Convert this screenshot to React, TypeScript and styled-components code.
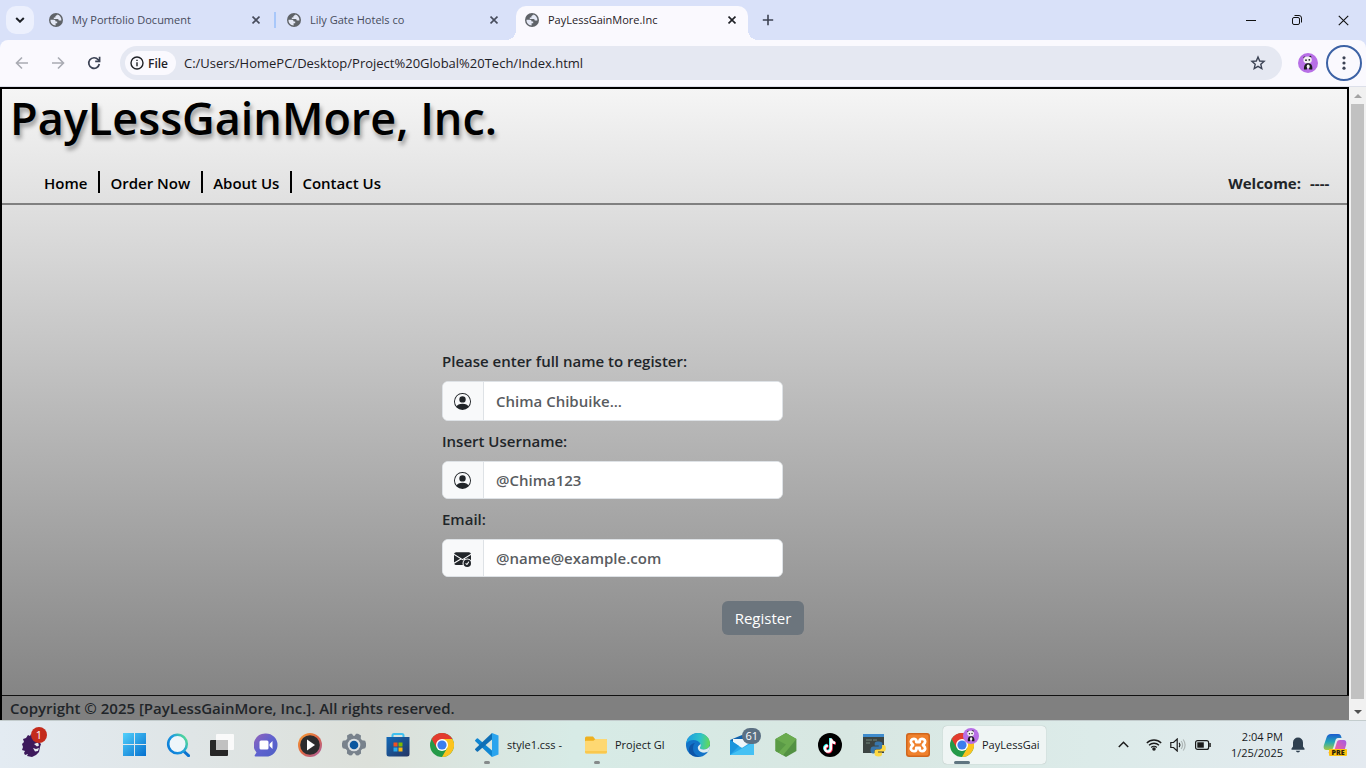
import React from "react";
import styled, { createGlobalStyle, css } from "styled-components";
import { BsPersonCircle, BsEnvelopeCheckFill } from "react-icons/bs";

const GlobalStyle = createGlobalStyle`
  * { box-sizing: border-box; }
  html, body { margin: 0; }
  body { font-family: "Open Sans", "Noto Sans", sans-serif; color: #212529; }
  button, input { font: inherit; color: inherit; }
  button { border: 0; padding: 0; background: none; cursor: pointer; }
  svg { display: block; flex: none; }
`;

const Screen = styled.div`
  display: flex;
  flex-direction: column;
  height: 100vh;
  overflow: hidden;
  background: #d9e1f9;
`;

/* ---------- browser chrome ---------- */

const TabStrip = styled.div`
  display: flex;
  height: 40px;
  flex: none;
  padding-left: 6px;
`;

const TabSearch = styled.button`
  display: grid;
  place-items: center;
  width: 28px;
  height: 28px;
  margin: 6px 4px 0 0;
  border-radius: 10px;
  background: #ecf0fd;
  color: #1d2026;
`;

const Tab = styled.div<{ $active?: boolean }>`
  position: relative;
  display: flex;
  align-items: center;
  gap: 9px;
  width: 238px;
  height: 34px;
  margin-top: 6px;
  padding: 0 10px 6px 11px;
  font-size: 11px;
  line-height: 16px;
  color: #474c5c;
  ${(p) =>
    p.$active &&
    css`
      width: 232px;
      margin: 6px 4px 0 2px;
      padding: 0 6px 6px 9px;
      background: #faf9fe;
      border-radius: 10px 10px 0 0;
      color: #1f2126;
      &::before,
      &::after {
        content: "";
        position: absolute;
        bottom: 0;
        width: 10px;
        height: 10px;
      }
      &::before {
        left: -10px;
        background: radial-gradient(circle at 0 0, transparent 10px, #faf9fe 10px);
      }
      &::after {
        right: -10px;
        background: radial-gradient(circle at 100% 0, transparent 10px, #faf9fe 10px);
      }
    `}
`;

const TabTitle = styled.span`
  flex: 1;
  white-space: nowrap;
  overflow: hidden;
`;

const TabDivider = styled.span`
  width: 2px;
  height: 16px;
  margin: 12px 0 0 -2px;
  background: #a8c7fa;
`;

const TabButton = styled.button`
  display: grid;
  place-items: center;
  width: 20px;
  height: 20px;
`;

const NewTab = styled(TabButton)`
  width: 28px;
  height: 28px;
  margin: 6px 0 0 2px;
  color: #3c4252;
`;

const WindowControls = styled.div`
  display: flex;
  margin-left: auto;
`;

const WindowButton = styled.button`
  display: grid;
  place-items: center;
  width: 46px;
  height: 40px;
  color: #111;
`;

const Toolbar = styled.div`
  display: flex;
  align-items: center;
  flex: none;
  height: 47px;
  padding: 0 4px;
  background: #faf9fe;
  border-bottom: 1px solid #dde0ea;
  border-radius: 8px 8px 0 0;
`;

const ToolButton = styled.button<{ $dim?: boolean }>`
  display: grid;
  place-items: center;
  width: 36px;
  height: 36px;
  color: ${(p) => (p.$dim ? "#a9abb3" : "#3b4254")};
`;

const AddressBar = styled.div`
  display: flex;
  align-items: center;
  flex: 1;
  height: 34px;
  margin: 0 8px;
  padding: 0 14px 0 5px;
  border-radius: 17px;
  background: #e5e8f2;
`;

const FileChip = styled.button`
  display: flex;
  align-items: center;
  gap: 4px;
  height: 24px;
  padding: 0 8px 0 5px;
  border-radius: 12px;
  background: #faf9fe;
  color: #1f2126;
  font-size: 12px;
  font-weight: 600;
`;

const AddressInput = styled.input`
  flex: 1;
  min-width: 0;
  margin-left: 8px;
  padding: 0;
  border: 0;
  outline: 0;
  background: transparent;
  font-size: 13px;
  line-height: 20px;
  color: #1f2126;
`;

const MenuButton = styled.button`
  display: grid;
  place-items: center;
  width: 36px;
  height: 36px;
  border: 2px solid #3c62a5;
  border-radius: 50%;
  color: #3b4254;
`;

/* ---------- page ---------- */

const Viewport = styled.div`
  display: flex;
  flex: 1;
  min-height: 0;
`;

const Page = styled.div`
  display: flex;
  flex-direction: column;
  flex: 1;
  min-width: 0;
  border: 2px solid #000;
  border-bottom: 0;
  background: linear-gradient(#f5f5f5, #808080);
  font-size: 15px;
  line-height: 24px;
  font-weight: 600;
`;

const Header = styled.header`
  border-bottom: 2px solid #808080;
`;

const Brand = styled.h1`
  margin: 0;
  padding: 0 8px 2px;
  font-size: 45px;
  line-height: 58px;
  font-weight: 600;
  color: #000;
  text-shadow: 2px 4px 4px rgba(0, 0, 0, 0.35);
`;

const NavRow = styled.div`
  display: flex;
  align-items: center;
  justify-content: space-between;
  padding: 22px 13px 10px 32px;
`;

const NavList = styled.ul`
  display: flex;
  margin: 0;
  padding: 0;
  list-style: none;
`;

const NavItem = styled.li`
  display: flex;
  height: 22px;
  padding: 0 11px 0 10px;
  align-items: center;
  & + & {
    border-left: 2px solid #000;
  }
`;

const NavLink = styled.a`
  padding-top: 2px;
  color: #000;
  text-decoration: none;
`;

const Welcome = styled.div`
  display: flex;
  gap: 9px;
  padding-top: 2px;
  line-height: 20px;
  font-weight: 700;
`;

const UserName = styled.span`
  min-width: 24px;
`;

const Main = styled.main`
  flex: 1;
  min-height: 0;
  padding-top: 144px;
`;

const Form = styled.form`
  display: flex;
  flex-direction: column;
  width: 465px;
  margin: 0 auto;
`;

const Label = styled.label`
  margin-bottom: 8px;
`;

const InputGroup = styled.div<{ $tall?: boolean }>`
  display: flex;
  width: 341px;
  height: ${(p) => (p.$tall ? 40 : 38)}px;
  margin-bottom: 8px;
  border: 1px solid #dee2e6;
  border-radius: 6px;
  overflow: hidden;
  background: #fff;
`;

const Addon = styled.span`
  display: flex;
  align-items: center;
  width: 41px;
  padding-left: 11px;
  border-right: 1px solid #dee2e6;
  background: #f8f9fa;
`;

const TextInput = styled.input`
  flex: 1;
  min-width: 0;
  padding: 0 12px;
  border: 0;
  outline: 0;
  background: #fff;
  font-weight: 600;
  &::placeholder {
    color: #595c5f;
    opacity: 1;
  }
`;

const RegisterButton = styled.button`
  width: 82px;
  height: 34px;
  margin: 16px 0 0 280px;
  border-radius: 6px;
  background: #6c757d;
  color: #fff;
  font-weight: 400;
`;

const Footer = styled.footer`
  height: 25px;
  margin-right: -2px;
  padding-left: 8px;
  border-top: 1px solid #111;
  background: #808080;
`;

const ScrollTrack = styled.div`
  display: flex;
  flex-direction: column;
  align-items: center;
  width: 17px;
  background: #f1f1f1;
`;

const ScrollArrow = styled.button`
  display: grid;
  place-items: center;
  width: 17px;
  height: 17px;
`;

const ScrollThumb = styled.div`
  width: 13px;
  flex: 1;
  margin-bottom: 4px;
  background: #c1c1c1;
`;

/* ---------- taskbar ---------- */

const Taskbar = styled.div`
  display: flex;
  align-items: center;
  flex: none;
  height: 48px;
  padding: 0 9px 0 10px;
  border-top: 1px solid #c3cccd;
  background: linear-gradient(90deg, #e3ebf2 0%, #dfe5e6 14%, #dce0da 27%, #d7ebe6 42%, #d8e7e2 62%, #dcebe9 80%, #e4eaf0 100%);
  font-size: 11px;
  line-height: 16px;
  color: #16191c;
`;

const AppGroup = styled.div`
  display: flex;
  margin-left: 58px;
`;

const TaskButton = styled.button<{ $wide?: number; $active?: boolean }>`
  position: relative;
  display: flex;
  align-items: center;
  justify-content: ${(p) => (p.$wide ? "flex-start" : "center")};
  gap: 8px;
  width: ${(p) => p.$wide || 44}px;
  height: 38px;
  padding: ${(p) => (p.$active ? "0 0 0 7px" : p.$wide ? "0 0 0 11px" : "0")};
  ${(p) =>
    p.$active &&
    css`
      margin: 0 3px;
      border-radius: 4px;
      background: #eff5f4;
      box-shadow: 0 0 1px rgba(0, 0, 0, 0.3);
    `}
`;

const TaskLabel = styled.span`
  text-align: left;
  white-space: nowrap;
`;

const Running = styled.span<{ $active?: boolean }>`
  position: absolute;
  bottom: 0;
  left: ${(p) => (p.$active ? 11 : 20)}px;
  width: ${(p) => (p.$active ? 16 : 6)}px;
  height: 3px;
  border-radius: 2px;
  background: ${(p) => (p.$active ? "#5f7580" : "#858a8a")};
`;

const Badge = styled.span<{ $red?: boolean }>`
  position: absolute;
  top: ${(p) => (p.$red ? 1 : 2)}px;
  right: ${(p) => (p.$red ? 7 : 3)}px;
  min-width: 16px;
  height: 16px;
  padding: 0 3px;
  border-radius: 8px;
  background: ${(p) => (p.$red ? "#c42b1c" : "#5b7083")};
  color: #fff;
  font-size: 11px;
  line-height: 16px;
  text-align: center;
`;

const PandaBadge = styled.span`
  position: absolute;
  top: 2px;
  left: 20px;
`;

const Tray = styled.div`
  display: flex;
  align-items: center;
  margin-left: auto;
`;

const TrayButton = styled.button<{ $w: number }>`
  display: grid;
  place-items: center;
  width: ${(p) => p.$w}px;
  height: 38px;
`;

const Clock = styled.button`
  width: 67px;
  text-align: right;
  font-size: 11px;
  line-height: 16px;
`;

/* ---------- icons ---------- */

const Globe = () => (
  <svg width="14" height="14" viewBox="0 0 14 14">
    <circle cx="7" cy="7" r="7" fill="#5f6368" />
    <path d="M1.500 6.700L5 6.700C6.500 6.700 6.600 8 6.600 8.500H8.200V10.200H6.600V12.400C3.700 12.300 1.300 9.800 1.500 6.700z" fill="#e4e8f5" />
    <path d="M8.300 1.600C8.300 2.800 7.600 3 6.400 3V4.600H4.800V6H8.600C9.600 6 9.700 7 9.700 7.600H12.400C12.700 4.700 10.900 2.300 8.300 1.600z" fill="#e4e8f5" />
  </svg>
);

const Cross = ({ size = 8, w = 1.6 }: { size?: number; w?: number }) => (
  <svg width={size} height={size} viewBox="0 0 10 10" fill="none" stroke="currentColor" strokeWidth={w * (10 / size)}>
    <path d="M.7.7l8.600 8.600M9.300.7L.7 9.300" />
  </svg>
);

const Arrow = ({ flip }: { flip?: boolean }) => (
  <svg width="14" height="14" viewBox="0 0 14 14" fill="none" stroke="currentColor" strokeWidth="1.600">
    <path d={flip ? "M1 7h11M7 1.500L12.500 7 7 12.500" : "M13 7H2M7 1.500L1.500 7 7 12.500"} />
  </svg>
);

const Panda = ({ size }: { size: number }) => (
  <svg width={size} height={size} viewBox="0 0 20 20">
    <circle cx="10" cy="10" r="10" fill="#b76fe6" />
    <circle cx="6.500" cy="4.500" r="1.100" fill="#222" />
    <circle cx="12.300" cy="3.900" r="1.100" fill="#222" />
    <ellipse cx="9.600" cy="6.900" rx="4.200" ry="3.400" fill="#f2f2f2" />
    <circle cx="8" cy="7.200" r=".9" fill="#222" />
    <circle cx="11.300" cy="6.800" r=".9" fill="#222" />
    <path d="M6 16.500c-.3-4 1-6.300 4-6.300s4.800 2 4.300 6.300h-3l-.6-2.500h-1.400l-.5 2.500z" fill="#1b1b1f" />
    <ellipse cx="10.200" cy="13.500" rx="1.500" ry="2" fill="#f2f2f2" />
  </svg>
);

const Chrome = () => (
  <svg width="24" height="24" viewBox="0 0 24 24">
    <circle cx="12" cy="12" r="12" fill="#249a48" />
    <path d="M22.400 6A12 12 0 0 1 12 24l5.200-9L12 6z" fill="#fcc31e" />
    <path d="M1.600 6L6.800 15 12 12V6h10.400A12 12 0 0 0 1.600 6z" fill="#e33b2e" />
    <circle cx="12" cy="12" r="6" fill="#fff" />
    <circle cx="12" cy="12" r="4.600" fill="#3b7ded" />
  </svg>
);

const Lion = () => (
  <svg width="20" height="24" viewBox="0 0 20 24" fill="#3d195b">
    <path d="M6 2l2 1 1-2 1.500 2L13 1l1 3 3 1v4l2 2-1 3-1 5-3 3-4 2-5-1 1-2-3 1-1-2 1-2-3-1 1-3-1-3 2-2-1-3 3-1z" />
    <path d="M12 11l4-1.500 1 3-2 1zM11 15l3 1 3-1-1 3-3 .5z" fill="#e6ebf1" />
  </svg>
);

const Windows = () => (
  <svg width="23" height="23" viewBox="0 0 23 23">
    <defs>
      <linearGradient id="win" x1="0" y1="0" x2="1" y2="1">
        <stop offset="0" stopColor="#52d0fb" />
        <stop offset="1" stopColor="#0570cf" />
      </linearGradient>
    </defs>
    <path d="M0 0h11v11H0zM12 0h11v11H12zM0 12h11v11H0zM12 12h11v11H12z" fill="url(#win)" />
  </svg>
);

const Search = () => (
  <svg width="24" height="24" viewBox="0 0 24 24" fill="none">
    <defs>
      <linearGradient id="srch" x1="0" y1=".8" x2="1" y2=".1">
        <stop offset="0" stopColor="#0a7bd8" />
        <stop offset=".5" stopColor="#1d9be0" />
        <stop offset="1" stopColor="#5be38c" />
      </linearGradient>
    </defs>
    <path d="M17.500 18l5 4.700" stroke="#0b72cf" strokeWidth="3" strokeLinecap="round" />
    <circle cx="11.500" cy="11" r="9.300" stroke="url(#srch)" strokeWidth="2.600" fill="#eef6fa" />
  </svg>
);

const TaskView = () => (
  <svg width="24" height="24" viewBox="0 0 24 24">
    <rect x="0" y="7" width="18" height="16" rx="1" fill="#262626" />
    <rect x="6" y="1" width="18" height="16" rx="1" fill="#fafafa" />
    <path d="M6 7h12v10H6z" fill="#c1c1c1" />
  </svg>
);

const Chat = () => (
  <svg width="24" height="24" viewBox="0 0 24 24">
    <defs>
      <linearGradient id="chat" x1="0" y1="0" x2="1" y2="1">
        <stop offset="0" stopColor="#9563b8" />
        <stop offset=".5" stopColor="#5f62cf" />
        <stop offset="1" stopColor="#4d5fc4" />
      </linearGradient>
    </defs>
    <path d="M12 .5A11.500 11.500 0 1 1 12 23.500H1.500c-1 0-1.200-.8-.6-1.500l1.600-2.600A11.500 11.500 0 0 1 12 .5z" fill="url(#chat)" />
    <rect x="5.500" y="7.500" width="9" height="9" rx="1.500" fill="#fff" />
    <path d="M15.500 11l3-3v8l-3-3z" fill="#fff" />
  </svg>
);

const Media = () => (
  <svg width="24" height="24" viewBox="0 0 24 24">
    <defs>
      <linearGradient id="med" x1="0" y1="0" x2="1" y2="1">
        <stop offset="0" stopColor="#f7a235" />
        <stop offset=".5" stopColor="#dd6546" />
        <stop offset="1" stopColor="#a860a8" />
      </linearGradient>
    </defs>
    <circle cx="12" cy="12" r="12" fill="url(#med)" />
    <circle cx="12" cy="12" r="9.800" fill="#2c2c2e" />
    <path d="M9 6.500v11l8-5.500z" fill="#fff" />
  </svg>
);

const Gear = () => (
  <svg width="24" height="24" viewBox="0 0 24 24">
    <path d="M8 .8h2l1.200 2h1.600l1.200-2h2l3 1.800-.3 3 1.300 1.600 3.200.5.8 2.600v3l-.8 2-3 .6-1.300 1.600.2 3-2.900 2-2.200-.2-1.200-2h-1.600l-1.200 2-2.200.2-2.900-2 .2-3-1.300-1.600-3-.6-.8-2v-3l.8-2.600 3.200-.5 1.300-1.600-.3-3z" fill="#78828c" />
    <circle cx="12" cy="12" r="6.300" fill="#d9dee1" />
    <circle cx="12" cy="12" r="4.300" fill="#0a569f" />
  </svg>
);

const Store = () => (
  <svg width="24" height="24" viewBox="0 0 24 24">
    <defs>
      <linearGradient id="sto" x1="0" y1="0" x2="1" y2="1">
        <stop offset="0" stopColor="#1269b8" />
        <stop offset="1" stopColor="#253562" />
      </linearGradient>
    </defs>
    <path d="M6.500 6V2.500Q6.500 1 8 1h8q1.500 0 1.500 1.500V6" fill="none" stroke="#3fc0ef" strokeWidth="2" />
    <path d="M.5 4h23v17q0 2.500-2.500 2.500H3Q.5 23.500.5 21z" fill="url(#sto)" />
    <path d="M7.500 9.500h4v4h-4z" fill="#f05022" />
    <path d="M12.500 9.500h4v4h-4z" fill="#7fba00" />
    <path d="M7.500 14.500h4v4h-4z" fill="#27a9ea" />
    <path d="M12.500 14.500h4v4h-4z" fill="#fdb813" />
  </svg>
);

const Code = () => (
  <svg width="24" height="24" viewBox="0 0 24 24">
    <path d="M17 24v-6.500L3 5.500q-.6-.4-1.200 0L.3 7q-.6.600 0 1.200z" fill="#0f86d2" />
    <path d="M17 0v6.500L3 18.500q-.6.400-1.200 0L.3 17q-.6-.6 0-1.200z" fill="#0f6fb5" />
    <path d="M17 0l6.500 2.500v19L17 24z" fill="#2aa4ee" />
  </svg>
);

const Folder = () => (
  <svg width="22" height="18" viewBox="0 0 22 18">
    <path d="M0 2q0-1.500 1.500-1.500H8L10 3h10.500Q22 3 22 4.500V8H0z" fill="#eeb01f" />
    <path d="M0 5.500Q0 4.800 1 4.800h7.500L10.500 3H21q1 0 1 1v12q0 1.500-1.500 1.500h-19Q0 17.500 0 16z" fill="#fed872" />
    <path d="M0 15h22v1q0 1.500-1.500 1.500h-19Q0 17.500 0 16z" fill="#f9c84e" />
  </svg>
);

const Edge = () => (
  <svg width="24" height="24" viewBox="0 0 24 24">
    <defs>
      <linearGradient id="edg" x1="0" y1=".3" x2="1" y2=".4">
        <stop offset="0" stopColor="#1b9de2" />
        <stop offset=".6" stopColor="#2fc3c8" />
        <stop offset="1" stopColor="#63d957" />
      </linearGradient>
    </defs>
    <circle cx="12" cy="12" r="12" fill="#1273c8" />
    <path d="M.2 10.500C1 4.500 6 0 12 0c7 0 12 5 12 10.500 0 3.500-2.800 6-6.300 6-2.700 0-4-1-3.700-2 1-1.500 1-2.500.5-3.500C12.500 6.500 4.500 5 .2 10.500z" fill="url(#edg)" />
    <path d="M9 10c-3 3-2.500 9 1 12 1.500 1.200 4 1.900 6 1.300-4 1.200-9.500.5-12.600-3C2 15 4 10.500 9 10z" fill="#0d55a8" />
    <path d="M14.500 11c.5 1 .5 2-.5 3.500-.3 1 1 2 3.700 2 2.300 0 4.500-1 5.700-3l.6 0-.6 3-1.400 2.300c-3.500 1.600-8.500 1-10-2.800-.7-2 .5-3.500 2.500-5z" fill="#dcebf0" />
  </svg>
);

const Mail = () => (
  <svg width="24" height="20" viewBox="0 0 24 20">
    <path d="M0 5L12 0l12 5v7H0z" fill="#1163ae" />
    <path d="M3 4h18v8H3z" fill="#eef6fa" />
    <path d="M0 5l12 8 12-8v15H0z" fill="#28a8ea" />
    <path d="M0 20L24 7v13z" fill="#45c1f4" />
    <path d="M0 5l9 6-9 9z" fill="#1b94dc" />
  </svg>
);

const Node = () => (
  <svg width="22" height="24" viewBox="0 0 22 24">
    <path d="M11 0l10.400 6v12L11 24 .6 18V6z" fill="#539143" />
    <path d="M11 0l10.400 6L8 22.200.6 18V6z" fill="#6aab4f" />
    <path d="M.6 6L11 11.500 3.500 19.600.6 18z" fill="#5a9a46" />
  </svg>
);

const TikTok = () => (
  <svg width="24" height="24" viewBox="0 0 24 24" fill="none" strokeWidth="2.400">
    <circle cx="12" cy="12" r="12" fill="#000" />
    <path d="M12.200 5v10a3 3 0 1 1-3-3M12.200 5.500c.4 2.400 2 3.800 4.300 4" stroke="#25f4ee" />
    <path d="M13.600 6.300v10a3 3 0 1 1-3-3M13.600 6.500c.4 2.400 2 3.800 4.300 4" stroke="#fe2c55" />
    <path d="M12.900 5.600v10a3 3 0 1 1-3-3M12.900 6c.4 2.400 2 3.800 4.300 4" stroke="#fff" />
  </svg>
);

const Python = () => (
  <svg width="24" height="24" viewBox="0 0 24 24">
    <path d="M1 2h21v18H1z" fill="#3c4442" />
    <path d="M1 1h21v3H1z" fill="#3f8ccd" />
    <path d="M4 7h6M4 10h4M11 7h4" stroke="#70857a" />
    <path d="M16 8.500c-3 0-3.300 1-3.300 2.500v1.500h4v1h-5.500c-1.500 0-2.700 1-2.700 3.500s1 3.500 2.500 3.500h1.500v-2c0-1.500 1-2.500 2.500-2.500h3.500c1.200 0 2-.8 2-2V11c0-1.500-1-2.500-4.500-2.500z" fill="#3876ac" />
    <path d="M16.500 23.500c3 0 3.500-1 3.500-2.500v-1.500h-4v-1h5.500c1.500 0 2.300-1 2.300-3.200 0-2.300-.9-3.300-2.300-3.300h-1.400v2c0 1.500-1 2.500-2.500 2.500h-3c-1.200 0-2 .8-2 2V21c0 1.500 1 2.500 3.900 2.500z" fill="#fed843" />
  </svg>
);

const Xampp = () => (
  <svg width="24" height="24" viewBox="0 0 24 24">
    <rect width="24" height="24" rx="3" fill="#d1661d" />
    <rect x="1.500" y="1.500" width="21" height="21" rx="2" fill="#f0812d" />
    <path
      d="M8 5.800C5.300 5.800 4.300 8 5.200 9.800L7 12 5.200 14.200C4.300 16 5.300 18.200 8 18.200S10.300 16.200 10.300 15H13.700C13.700 16.200 13.500 18.200 16 18.200S19.700 16 18.800 14.200L17 12 18.800 9.800C19.700 8 18.700 5.800 16 5.800S13.700 7.800 13.700 9H10.300C10.300 7.800 10.500 5.800 8 5.800z"
      fill="none"
      stroke="#fff"
      strokeWidth="2.800"
      strokeLinejoin="round"
    />
  </svg>
);

const Copilot = () => (
  <svg width="24" height="24" viewBox="0 0 24 24">
    <defs>
      <linearGradient id="cpa" x1="0" y1="0" x2="0" y2="1">
        <stop offset="0" stopColor="#1b5bd0" />
        <stop offset=".5" stopColor="#23a7b8" />
        <stop offset="1" stopColor="#a6c843" />
      </linearGradient>
      <linearGradient id="cpb" x1="1" y1="0" x2="0" y2="1">
        <stop offset="0" stopColor="#a35be8" />
        <stop offset=".6" stopColor="#f0609a" />
        <stop offset="1" stopColor="#f58a4f" />
      </linearGradient>
    </defs>
    <path d="M8 1h7c2.500 0 3 1.500 3.600 4H15c-1.500 0-2.200 1-2.600 2.500L10.500 14c-.5 2-1.500 3-3.500 3H3.500C1 17 .2 15 .8 12.500l2.700-8C4.200 2.200 5.500 1 8 1z" fill="url(#cpa)" />
    <path d="M17 7h3.500c2.500 0 3.300 2 2.700 4.500L21 19c-.7 2.500-2 4-4.500 4H9c-2 0-3-1.500-3.500-4H9c1.500 0 2.200-1 2.600-2.500l2-6.500C14 8 15 7 17 7z" fill="url(#cpb)" />
    <rect x="6" y="16" width="18" height="7" rx="1" fill="#fdc312" />
    <text x="15" y="22" textAnchor="middle" fontSize="7" fontWeight="800" fontFamily="Open Sans, sans-serif" fill="#2a2208">PRE</text>
  </svg>
);

const navItems = ["Home", "Order Now", "About Us", "Contact Us"];

const fields = [
  { id: "fullname", label: "Please enter full name to register:", hint: "Chima Chibuike...", Icon: BsPersonCircle, tall: true },
  { id: "username", label: "Insert Username:", hint: "@Chima123", Icon: BsPersonCircle },
  { id: "email", label: "Email:", hint: "@name@example.com", Icon: BsEnvelopeCheckFill },
];

const pinned = [
  ["Start", Windows],
  ["Search", Search],
  ["Task view", TaskView],
  ["Chat", Chat],
  ["Media player", Media],
  ["Settings", Gear],
  ["Store", Store],
  ["Chrome", Chrome],
] as const;

const BrowserTab = ({ title, active }: { title: string; active?: boolean }) => (
  <Tab $active={active}>
    <Globe />
    <TabTitle>{title}</TabTitle>
    <TabButton aria-label={`Close ${title}`}>
      <Cross size={8} />
    </TabButton>
  </Tab>
);

export default function App() {
  return (
    <Screen>
      <GlobalStyle />
      <TabStrip>
        <TabSearch aria-label="Search tabs">
          <svg width="10" height="6" viewBox="0 0 10 6" fill="none" stroke="currentColor" strokeWidth="2">
            <path d="M1.200 1L5 4.700 8.800 1" />
          </svg>
        </TabSearch>
        <BrowserTab title="My Portfolio Document" />
        <TabDivider />
        <BrowserTab title="Lily Gate Hotels co" />
        <BrowserTab title="PayLessGainMore.Inc" active />
        <NewTab aria-label="New tab">
          <svg width="12" height="12" viewBox="0 0 12 12" stroke="currentColor" strokeWidth="1.600">
            <path d="M6 .8v10.400M.8 6h10.400" />
          </svg>
        </NewTab>
        <WindowControls>
          <WindowButton aria-label="Minimize">
            <svg width="10" height="10" viewBox="0 0 10 10" stroke="currentColor">
              <path d="M0 5.500h10" />
            </svg>
          </WindowButton>
          <WindowButton aria-label="Restore">
            <svg width="10" height="10" viewBox="0 0 10 10" fill="none" stroke="currentColor">
              <rect x=".5" y="2.500" width="7" height="7" rx="1.500" />
              <path d="M2.500.5H7Q9.500.5 9.500 3v4.500" />
            </svg>
          </WindowButton>
          <WindowButton aria-label="Close">
            <Cross size={11} w={1.1} />
          </WindowButton>
        </WindowControls>
      </TabStrip>

      <Toolbar>
        <ToolButton $dim aria-label="Back">
          <Arrow />
        </ToolButton>
        <ToolButton $dim aria-label="Forward">
          <Arrow flip />
        </ToolButton>
        <ToolButton aria-label="Reload">
          <svg width="14" height="14" viewBox="0 0 14 14" fill="none" stroke="currentColor" strokeWidth="1.700">
            <path d="M12.300 8A5.300 5.300 0 1 1 11.200 3.700L12.500 5" />
            <path d="M12.600.8V5.300H8.200" />
          </svg>
        </ToolButton>
        <AddressBar>
          <FileChip>
            <svg width="14" height="14" viewBox="0 0 14 14" fill="none" stroke="currentColor" strokeWidth="1.400">
              <circle cx="7" cy="7" r="6" />
              <path d="M7 6.200v4M7 3.700v1.400" />
            </svg>
            File
          </FileChip>
          <AddressInput
            aria-label="Address"
            defaultValue="C:/Users/HomePC/Desktop/Project%20Global%20Tech/Index.html"
          />
          <TabButton aria-label="Bookmark">
            <svg width="16" height="16" viewBox="0 0 16 16" fill="none" stroke="#3b4254" strokeWidth="1.400">
              <path d="M8 2l1.700 4 4.400.4-3.300 2.900 1 4.300L8 11.400l-3.800 2.200 1-4.300-3.300-2.900L6.300 6z" />
            </svg>
          </TabButton>
        </AddressBar>
        <ToolButton aria-label="Profile">
          <Panda size={20} />
        </ToolButton>
        <MenuButton aria-label="Menu">
          <svg width="4" height="14" viewBox="0 0 4 14" fill="currentColor">
            <circle cx="2" cy="1.800" r="1.600" />
            <circle cx="2" cy="7" r="1.600" />
            <circle cx="2" cy="12.200" r="1.600" />
          </svg>
        </MenuButton>
      </Toolbar>

      <Viewport>
        <Page>
          <Header>
            <Brand>PayLessGainMore, Inc.</Brand>
            <NavRow>
              <nav>
                <NavList>
                  {navItems.map((n) => (
                    <NavItem key={n}>
                      <NavLink href="#">{n}</NavLink>
                    </NavItem>
                  ))}
                </NavList>
              </nav>
              <Welcome>
                <span>Welcome:</span>
                <UserName>----</UserName>
              </Welcome>
            </NavRow>
          </Header>
          <Main>
            <Form onSubmit={(e) => e.preventDefault()}>
              {fields.map(({ id, label, hint, Icon, tall }) => (
                <React.Fragment key={id}>
                  <Label htmlFor={id}>{label}</Label>
                  <InputGroup $tall={tall}>
                    <Addon>
                      <Icon size={17} />
                    </Addon>
                    <TextInput id={id} placeholder={hint} />
                  </InputGroup>
                </React.Fragment>
              ))}
              <RegisterButton type="submit">Register</RegisterButton>
            </Form>
          </Main>
          <Footer>Copyright © 2025 [PayLessGainMore, Inc.]. All rights reserved.</Footer>
        </Page>
        <ScrollTrack>
          <ScrollArrow aria-label="Scroll up">
            <svg width="8" height="4" viewBox="0 0 8 4" fill="#a3a3a3">
              <path d="M0 4l4-4 4 4z" />
            </svg>
          </ScrollArrow>
          <ScrollThumb />
          <ScrollArrow aria-label="Scroll down">
            <svg width="8" height="4" viewBox="0 0 8 4" fill="#505050">
              <path d="M0 0l4 4 4-4z" />
            </svg>
          </ScrollArrow>
        </ScrollTrack>
      </Viewport>

      <Taskbar>
        <TaskButton aria-label="Widgets">
          <Lion />
          <Badge $red>1</Badge>
        </TaskButton>
        <AppGroup>
          {pinned.map(([name, Icon]) => (
            <TaskButton key={name} aria-label={name}>
              <Icon />
            </TaskButton>
          ))}
          <TaskButton $wide={110}>
            <Code />
            <TaskLabel>style1.css -</TaskLabel>
            <Running />
          </TaskButton>
          <TaskButton $wide={102}>
            <Folder />
            <TaskLabel>Project Gl</TaskLabel>
            <Running />
          </TaskButton>
          <TaskButton aria-label="Edge">
            <Edge />
          </TaskButton>
          <TaskButton aria-label="Mail">
            <Mail />
            <Badge>61</Badge>
          </TaskButton>
          <TaskButton aria-label="Node">
            <Node />
          </TaskButton>
          <TaskButton aria-label="TikTok">
            <TikTok />
          </TaskButton>
          <TaskButton aria-label="Python">
            <Python />
          </TaskButton>
          <TaskButton aria-label="XAMPP">
            <Xampp />
          </TaskButton>
          <TaskButton $wide={103} $active>
            <Chrome />
            <PandaBadge>
              <Panda size={16} />
            </PandaBadge>
            <TaskLabel>PayLessGai</TaskLabel>
            <Running $active />
          </TaskButton>
        </AppGroup>
        <Tray>
          <TrayButton $w={38} aria-label="Hidden icons">
            <svg width="11" height="7" viewBox="0 0 11 7" fill="none" stroke="#1b1b1b" strokeWidth="1.500">
              <path d="M.8 6L5.500 1.300 10.200 6" />
            </svg>
          </TrayButton>
          <TrayButton $w={24} aria-label="Network">
            <svg width="16" height="13" viewBox="0 0 16 13" fill="none" stroke="#1b1b1b" strokeWidth="1.300">
              <path d="M.8 5a10.200 10.200 0 0 1 14.400 0M3 7.300a7.100 7.100 0 0 1 10 0M5.200 9.500a4 4 0 0 1 5.600 0" />
              <circle cx="8" cy="11" r="1.100" fill="#1b1b1b" />
            </svg>
          </TrayButton>
          <TrayButton $w={24} aria-label="Volume">
            <svg width="16" height="14" viewBox="0 0 16 14" fill="none" stroke="#1b1b1b" strokeWidth="1.200">
              <path d="M.8 4.500h2.700L7.200 1v12L3.500 9.500H.8z" />
              <path d="M9.200 4.800q1.500 2.200 0 4.400" />
              <path d="M11.200 3q2.800 4 0 8M13.200 1.500q3.800 5.500 0 11" stroke="#adb5b5" />
            </svg>
          </TrayButton>
          <TrayButton $w={26} aria-label="Battery">
            <svg width="16" height="10" viewBox="0 0 16 10">
              <rect x=".6" y=".6" width="13" height="8.800" rx="2" fill="none" stroke="#1b1b1b" strokeWidth="1.200" />
              <rect x="2.300" y="2.300" width="6.500" height="5.400" fill="#1b1b1b" />
              <path d="M14.300 3h1.500v4h-1.500z" fill="#1b1b1b" />
            </svg>
          </TrayButton>
          <Clock>
            2:04 PM
            <br />
            1/25/2025
          </Clock>
          <TrayButton $w={30} aria-label="Notifications">
            <svg width="14" height="16" viewBox="0 0 14 16" fill="#2f4050">
              <path d="M7 .5a5 5 0 0 1 5 5V9.500l1.600 2.300q.3 1-.6 1H1q-.9 0-.6-1L2 9.500v-4a5 5 0 0 1 5-5zM4.800 13.800h4.400Q8.500 15.500 7 15.500t-2.200-1.700z" />
            </svg>
          </TrayButton>
          <TrayButton $w={44} aria-label="Copilot">
            <Copilot />
          </TrayButton>
        </Tray>
      </Taskbar>
    </Screen>
  );
}
